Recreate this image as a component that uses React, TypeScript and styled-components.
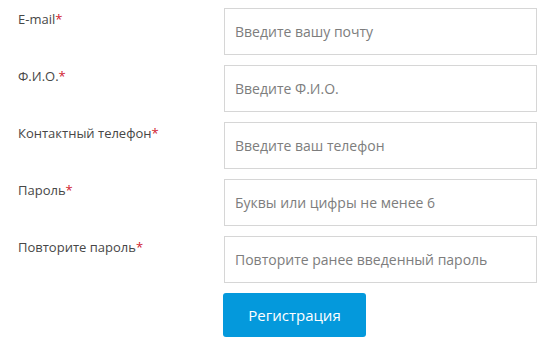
import styled, { createGlobalStyle } from "styled-components";

const GlobalStyle = createGlobalStyle`
  body {
    margin: 0;
    background: #fff;
    font-family: "Open Sans", "Liberation Sans", sans-serif;
  }
`;

type Field = {
  label: string;
  placeholder: string;
  type: string;
};

const fields: Field[] = [
  { label: "E-mail", placeholder: "Введите вашу почту", type: "email" },
  { label: "Ф.И.О.", placeholder: "Введите Ф.И.О.", type: "text" },
  { label: "Контактный телефон", placeholder: "Введите ваш телефон", type: "tel" },
  { label: "Пароль", placeholder: "Буквы или цифры не менее 6", type: "password" },
  { label: "Повторите пароль", placeholder: "Повторите ранее введенный пароль", type: "password" },
];

function App() {
  return (
    <>
      <GlobalStyle />
      <Form onSubmit={(e) => e.preventDefault()}>
        {fields.map((f) => (
          <Row key={f.label}>
            <Label>
              {f.label}
              <Star>*</Star>
            </Label>
            <Input type={f.type} placeholder={f.placeholder} />
          </Row>
        ))}
        <Row>
          <span />
          <Button type="submit">Регистрация</Button>
        </Row>
      </Form>
    </>
  );
}

export default App;

const Form = styled.form`
  display: flex;
  flex-direction: column;
  gap: 10px;
  padding: 8px 0 0 18px;
`;

const Row = styled.div`
  display: grid;
  grid-template-columns: 206px 313px;
  align-items: start;
`;

const Label = styled.label`
  font-size: 13px;
  line-height: 18px;
  color: #474747;
  padding-top: 2px;
`;

const Star = styled.span`
  color: #d0212f;
`;

const Input = styled.input`
  box-sizing: border-box;
  height: 47px;
  width: 313px;
  border: 1px solid #d6d6d6;
  border-radius: 0;
  padding: 0 10px;
  font-family: "Open Sans", "Liberation Sans", sans-serif;
  font-size: 14px;
  color: #333;
  outline: none;

  &::placeholder {
    color: #7d7d7d;
  }
`;

const Button = styled.button`
  justify-self: start;
  margin-left: -1px;
  width: 143px;
  height: 44px;
  border: none;
  border-radius: 3px;
  background: #0499dc;
  color: #fff;
  font-family: "Open Sans", "Liberation Sans", sans-serif;
  font-size: 15px;
  cursor: pointer;
`;
